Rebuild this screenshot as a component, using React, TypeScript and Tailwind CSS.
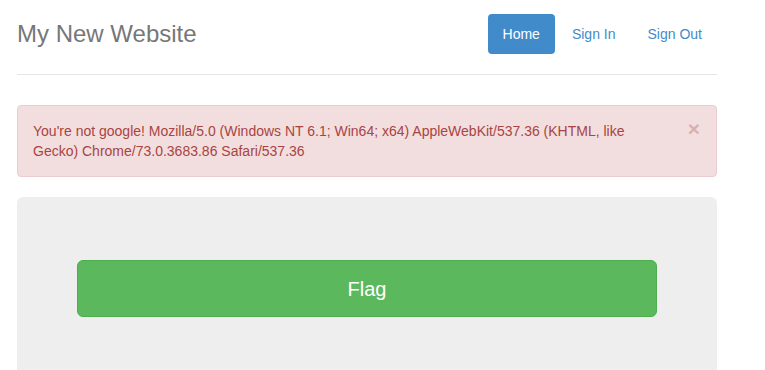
import React from 'react';

const navItems = [
  { label: 'Home', active: true },
  { label: 'Sign In', active: false },
  { label: 'Sign Out', active: false },
];

export default function App() {
  return (
    <div
      className="min-h-screen bg-white text-[14px] leading-[20px] text-[#333]"
      style={{ fontFamily: '"Liberation Sans", Arial, sans-serif' }}
    >
      <div className="w-[700px] ml-[17px]">
        {/* Header */}
        <div className="flex items-start justify-between pt-[14px] pb-[20px] border-b border-[#e5e5e5]">
          <h3 className="text-[24px] leading-[40px] text-[#777] font-normal">My New Website</h3>
          <ul className="flex gap-[2px]">
            {navItems.map((item) => (
              <li key={item.label}>
                <a
                  href="#"
                  className={
                    item.active
                      ? 'block px-[15px] py-[10px] rounded-[4px] bg-[#428bca] text-white'
                      : 'block px-[15px] py-[10px] rounded-[4px] text-[#428bca]'
                  }
                >
                  {item.label}
                </a>
              </li>
            ))}
          </ul>
        </div>

        {/* Alert */}
        <div className="mt-[30px] mb-[20px] flex items-start rounded-[4px] border border-[#ebccd1] bg-[#f2dede] text-[#a94442] pl-[15px] pr-[16px] py-[15px]">
          <div className="flex-1 pr-[16px]">
            You're not google! Mozilla/5.0 (Windows NT 6.1; Win64; x64) AppleWebKit/537.36 (KHTML, like
            Gecko) Chrome/73.0.3683.86 Safari/537.36
          </div>
          <button className="text-[21px] leading-[21px] font-bold text-[#a94442] opacity-30 -mt-[3px]">×</button>
        </div>

        {/* Jumbotron */}
        <div className="rounded-[6px] bg-[#eee] px-[60px] pt-[63px] pb-[60px]">
          <button className="w-full h-[57px] flex items-center justify-center rounded-[6px] border border-[#4cae4c] bg-[#5cb85c] text-white text-[20px]">
            Flag
          </button>
        </div>
      </div>
    </div>
  );
}
